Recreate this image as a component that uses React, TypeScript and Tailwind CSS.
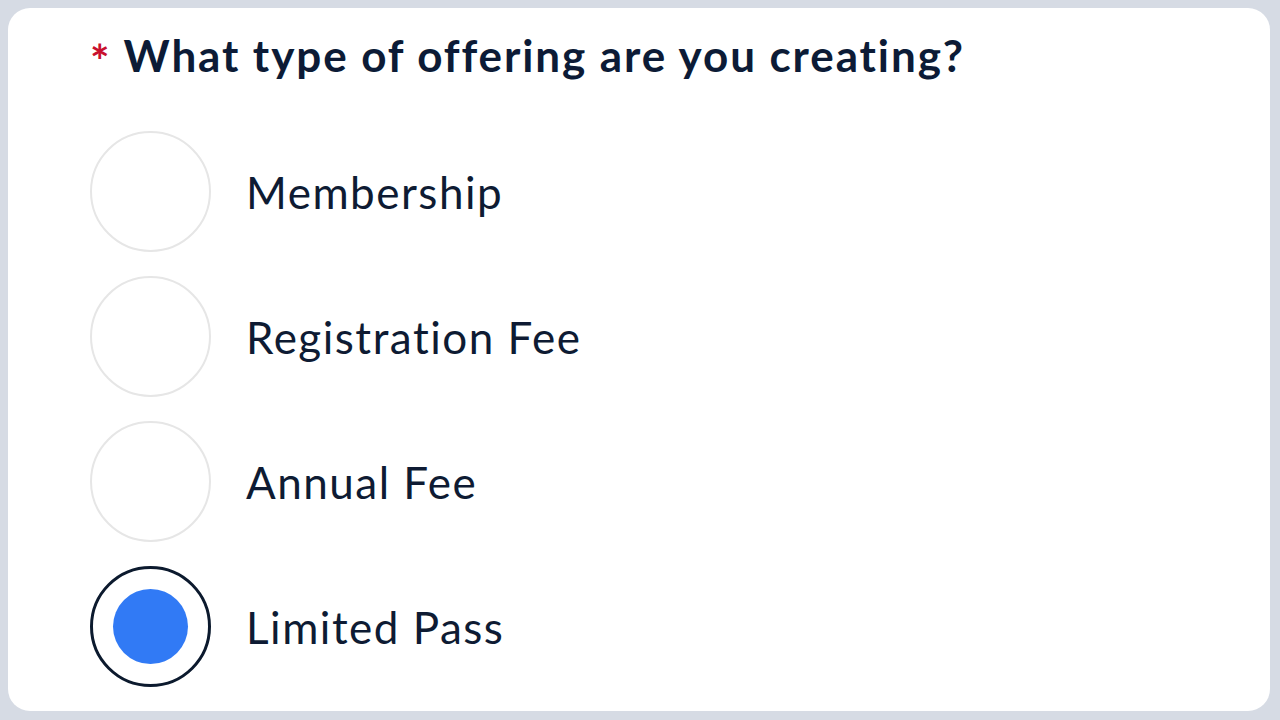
import React from "react";

const options = [
  { label: "Membership", selected: false },
  { label: "Registration Fee", selected: false },
  { label: "Annual Fee", selected: false },
  { label: "Limited Pass", selected: true },
];

export default function App() {
  return (
    <div className="w-[1280px] h-[720px] bg-[#d6dbe4] pl-[8px] pt-[8px] pr-[10px] pb-[9px] overflow-hidden">
      <div
        className="w-full h-full bg-white rounded-[22px] pl-[82px] pt-[21px] overflow-hidden"
        style={{ fontFamily: "Lato, 'Noto Sans', sans-serif" }}
      >
        <div className="flex items-start h-[52px] text-[#0c1b36]">
          <span className="text-[#c8102e] font-bold text-[46px] leading-none mt-[9px] mr-[14px]">*</span>
          <h1 className="font-bold text-[44px] leading-[52px] tracking-[1.9px]">
            What type of offering are you creating?
          </h1>
        </div>
        <div className="flex flex-col gap-[24px] mt-[50px]">
          {options.map((o) => (
            <div key={o.label} className="flex items-center">
              {o.selected ? (
                <div className="w-[121px] h-[121px] rounded-full border-[3px] border-[#0c1a2e] flex items-center justify-center">
                  <div className="w-[75px] h-[75px] rounded-full bg-[#317af5]" />
                </div>
              ) : (
                <div className="w-[121px] h-[121px] rounded-full border-[2px] border-[#e6e6e6]" />
              )}
              <span className="ml-[35px] text-[44px] text-[#0e1b33] leading-none tracking-[1.5px]">
                {o.label}
              </span>
            </div>
          ))}
        </div>
      </div>
    </div>
  );
}
